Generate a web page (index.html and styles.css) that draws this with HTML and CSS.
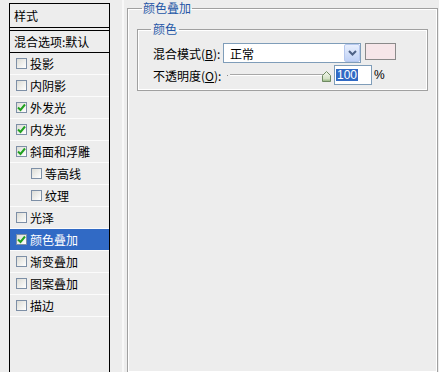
FILE: index.html
```html
<!DOCTYPE html>
<html lang="zh-CN">
<head>
    <meta charset="UTF-8">
    <title>图层样式 - 颜色叠加</title>
    <link rel="stylesheet" href="styles.css">
</head>
<body>
    <div class="dialog">
        <div class="styles-list">
            <div class="list-head">样式</div>
            <div class="list-blend">混合选项:默认</div>
            <div class="list-item"><span class="check"></span>投影</div>
            <div class="list-item"><span class="check"></span>内阴影</div>
            <div class="list-item"><span class="check on"><svg width="9" height="9" viewBox="0 0 9 9"><path d="M1 4.5 L3.5 7 L8 1.5" fill="none" stroke="#21a121" stroke-width="2"/></svg></span>外发光</div>
            <div class="list-item"><span class="check on"><svg width="9" height="9" viewBox="0 0 9 9"><path d="M1 4.5 L3.5 7 L8 1.5" fill="none" stroke="#21a121" stroke-width="2"/></svg></span>内发光</div>
            <div class="list-item"><span class="check on"><svg width="9" height="9" viewBox="0 0 9 9"><path d="M1 4.5 L3.5 7 L8 1.5" fill="none" stroke="#21a121" stroke-width="2"/></svg></span>斜面和浮雕</div>
            <div class="list-item sub"><span class="check"></span>等高线</div>
            <div class="list-item sub"><span class="check"></span>纹理</div>
            <div class="list-item"><span class="check"></span>光泽</div>
            <div class="list-item selected"><span class="check on"><svg width="9" height="9" viewBox="0 0 9 9"><path d="M1 4.5 L3.5 7 L8 1.5" fill="none" stroke="#21a121" stroke-width="2"/></svg></span>颜色叠加</div>
            <div class="list-item"><span class="check"></span>渐变叠加</div>
            <div class="list-item"><span class="check"></span>图案叠加</div>
            <div class="list-item"><span class="check"></span>描边</div>
        </div>

        <div class="gutter"></div>

        <div class="panel">
            <fieldset class="group outer">
                <legend>颜色叠加</legend>
                <fieldset class="group inner">
                    <legend>颜色</legend>
                    <div class="field-row">
                        <span class="field-label">混合模式(<u>B</u>):</span>
                        <div class="select">
                            <span class="select-text">正常</span>
                            <span class="select-arrow"><svg width="9" height="6" viewBox="0 0 9 6"><path d="M1 1 L4.5 4.5 L8 1" fill="none" stroke="#4d6185" stroke-width="2"/></svg></span>
                        </div>
                        <span class="swatch"></span>
                    </div>
                    <div class="field-row">
                        <span class="field-label">不透明度(<u>O</u>):</span>
                        <div class="slider">
                            <span class="slider-dot"></span>
                            <span class="slider-track"></span>
                            <svg class="slider-thumb" width="9" height="11" viewBox="0 0 9 11">
                                <defs>
                                    <linearGradient id="thumbFill" x1="0" y1="0" x2="0" y2="1">
                                        <stop offset="0" stop-color="#f4f7ee"/>
                                        <stop offset="0.7" stop-color="#d5e2c8"/>
                                        <stop offset="1" stop-color="#8fb37a"/>
                                    </linearGradient>
                                </defs>
                                <path d="M0.5 4.5 L4.5 0.5 L8.5 4.5 L8.5 10.5 L0.5 10.5 Z" fill="url(#thumbFill)" stroke="#6f8a62"/>
                            </svg>
                        </div>
                        <div class="number"><span>100</span></div>
                        <span class="percent">%</span>
                    </div>
                </fieldset>
            </fieldset>
        </div>
    </div>
</body>
</html>
```

FILE: styles.css
```css
body {
    margin: 0;
    background-color: #ededed;
    font-family: "Noto Sans CJK SC", "Liberation Sans", sans-serif;
    font-size: 12px;
    color: #000;
    overflow: hidden;
}

.dialog {
    display: flex;
    height: 372px;
}

/* left list of layer styles */
.styles-list {
    width: 99px;
    margin: 3px 0 0 9px;
    border: 1px solid #000;
    border-bottom: none;
}

.list-head {
    height: 23px;
    line-height: 23px;
    padding-left: 4px;
    border-bottom: 1px solid #000;
}

.list-blend {
    margin-top: 2px;
    height: 21px;
    line-height: 21px;
    padding-left: 4px;
    border-top: 1px solid #000;
    border-bottom: 1px solid #000;
}

.list-item {
    display: flex;
    align-items: center;
    height: 21px;
    padding-left: 6px;
    border-bottom: 1px solid #fbfbfb;
}

.list-item.sub {
    padding-left: 21px;
}

.list-item.selected {
    background-color: #316ac5;
    color: #fff;
}

.check {
    display: flex;
    align-items: center;
    justify-content: center;
    width: 11px;
    height: 11px;
    box-sizing: border-box;
    margin-right: 3px;
    border: 1px solid #7d8fa6;
    background: linear-gradient(135deg, #dcdcd6, #ffffff);
}

.gutter {
    width: 12px;
    margin-right: 3px;
    border-right: 2px solid #f8f8f8;
}

/* right settings panel */
.panel {
    flex: 1;
    min-width: 0;
    overflow: hidden;
}

.group {
    margin: 0;
    border: 1px solid #a0a0a0;
    box-shadow: inset 1px 1px 0 #fff, inset -1px -1px 0 #fff;
    min-width: 0;
}

.group legend {
    color: #2456a6;
    line-height: 14px;
}

.outer {
    margin: 1px 1px 0 0;
    padding: 0 9px;
    height: 371px;
    box-sizing: border-box;
    border-bottom: none;
}

.outer > legend {
    margin-left: 5px;
    padding: 0 1px;
}

.inner {
    margin-top: 7px;
    padding: 7px 0 5px 15px;
}

.inner > legend {
    margin-left: -2px;
    padding: 0 2px;
}

.field-row {
    display: flex;
    align-items: center;
}

.field-row + .field-row {
    margin-top: 2px;
}

.field-label {
    width: 70px;
}

.select {
    display: flex;
    align-items: center;
    width: 138px;
    height: 20px;
    box-sizing: border-box;
    border: 1px solid #7f9db9;
    background: #fff;
}

.select-text {
    flex: 1;
    padding-left: 6px;
}

.select-arrow {
    display: flex;
    align-items: center;
    justify-content: center;
    width: 16px;
    height: 18px;
    box-sizing: border-box;
    border: 1px solid #b6c8ee;
    border-radius: 2px;
    background: linear-gradient(#e8effd, #bfd1f6);
}

.swatch {
    align-self: flex-start;
    width: 31px;
    height: 17px;
    box-sizing: border-box;
    margin-left: 4px;
    border: 1px solid #8a8a8a;
    background: #f6e6e9;
}

.slider {
    display: flex;
    align-items: center;
    width: 104px;
    height: 20px;
    padding-left: 4px;
}

.slider-dot {
    width: 1px;
    height: 1px;
    margin-right: 2px;
    background: #8c8c8c;
}

.slider-track {
    flex: 1;
    height: 0;
    border-top: 1px solid #a8a8a8;
    border-bottom: 1px solid #fff;
}

.slider-thumb {
    margin: 3px 0 0 -1px;
}

.number {
    display: flex;
    align-items: center;
    width: 38px;
    height: 20px;
    box-sizing: border-box;
    margin-left: 3px;
    padding-left: 1px;
    border: 1px solid #7f9db9;
    background: #fff;
    font-family: "Liberation Sans", sans-serif;
}

.number span {
    padding: 0 1px;
    line-height: 12px;
    background: #316ac5;
    color: #fff;
}

.percent {
    margin-left: 2px;
    font-family: "Liberation Sans", sans-serif;
}
```
